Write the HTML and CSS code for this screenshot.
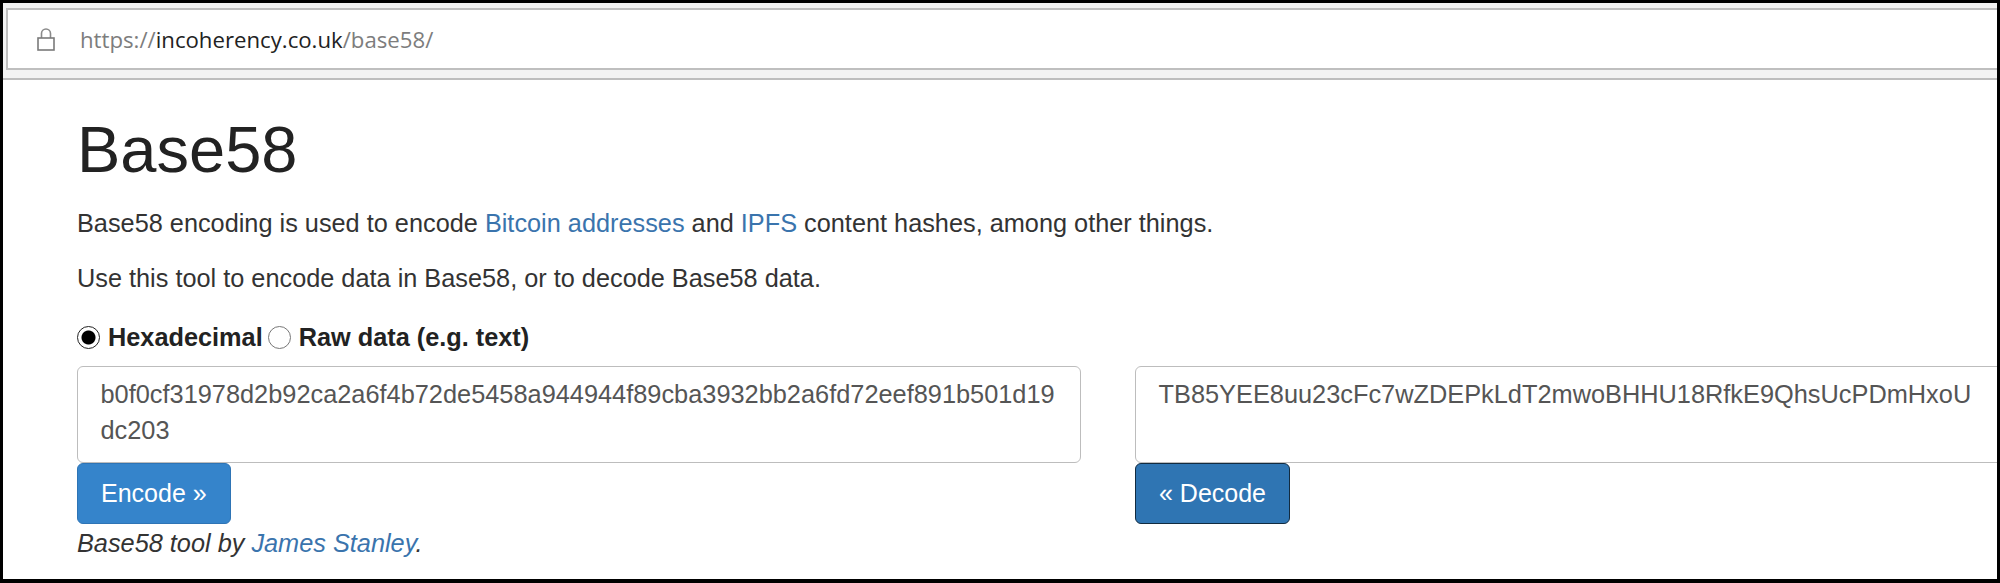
FILE: index.html
```html
<!DOCTYPE html>
<html lang="en">
<head>
<meta charset="utf-8">
<title>Base58</title>
<link rel="stylesheet" href="styles.css">
</head>
<body>
<div class="frame">
  <header class="chrome">
    <div class="address">
      <svg class="lock" viewBox="0 0 18 24" width="18" height="24" aria-hidden="true">
        <path d="M4.5 11V6.5a4.5 4.5 0 0 1 9 0V11" fill="none" stroke="#8a8a8a" stroke-width="1.6"/>
        <rect x="1" y="11" width="16" height="12" fill="none" stroke="#7a7a7a" stroke-width="1.6"/>
      </svg>
      <span class="url"><span class="dim">https://</span>incoherency.co.uk<span class="dim">/base58/</span></span>
    </div>
  </header>
  <main class="page">
    <h1 class="title">Base58</h1>
    <p class="para">Base58 encoding is used to encode <a href="#">Bitcoin addresses</a> and <a href="#">IPFS</a> content hashes, among other things.</p>
    <p class="para">Use this tool to encode data in Base58, or to decode Base58 data.</p>
    <div class="modes">
      <label class="mode"><input class="radio" type="radio" name="mode" checked> Hexadecimal</label>
      <label class="mode"><input class="radio" type="radio" name="mode"> Raw data (e.g. text)</label>
    </div>
    <div class="tools">
      <div class="tool">
        <textarea class="box" rows="2">b0f0cf31978d2b92ca2a6f4b72de5458a944944f89cba3932bb2a6fd72eef891b501d19dc203</textarea>
        <button class="btn btn-encode" type="button">Encode »</button>
      </div>
      <div class="tool">
        <textarea class="box" rows="2">TB85YEE8uu23cFc7wZDEPkLdT2mwoBHHU18RfkE9QhsUcPDmHxoU</textarea>
        <button class="btn btn-decode" type="button">« Decode</button>
      </div>
    </div>
    <p class="credit">Base58 tool by <a href="#">James Stanley</a>.</p>
  </main>
</div>
</body>
</html>
```
FILE: styles.css
```css
* { box-sizing: border-box; }
html, body { margin: 0; height: 100%; overflow: hidden; background: #000; }
.frame {
  height: 583px;
  border: solid #000;
  border-width: 3px 3px 4px 3px;
  background: #fff;
  overflow: hidden;
  font-family: "Liberation Sans", Arial, sans-serif;
  color: #333;
}
.chrome {
  padding: 5px 0 0 3px;
  height: 77px;
  background: #f2f2f2;
  border-bottom: 2px solid #bdbdbd;
}
.address {
  height: 62px;
  background: #fff;
  border: solid #bfbfbf;
  border-width: 2px 0 2px 2px;
  display: flex;
  align-items: center;
  padding-left: 29px;
}
.lock { flex: none; }
.url {
  margin-left: 25px;
  font-family: "Open Sans", sans-serif;
  font-size: 22.2px;
  color: #222;
}
.dim { color: #7d7d7d; }
.page { padding: 35px 0 0 74px; }
.title {
  margin: 0;
  font-size: 65px;
  font-weight: 400;
  line-height: 70px;
  color: #222;
}
.para { margin: 0; font-size: 25.3px; line-height: 36px; height: 55px; }
.title + .para { margin-top: 20px; }
a { color: #3a74ad; text-decoration: none; }
.modes { display: flex; gap: 5px; align-items: center; height: 36px; margin-top: 4px; font-weight: 700; font-size: 25.3px; }
.mode { display: flex; align-items: center; gap: 8px; color: #222; }
.radio {
  appearance: none;
  margin: 0;
  width: 23px;
  height: 23px;
  border-radius: 50%;
  border: 1.5px solid #777;
  background: #fff;
}
.radio:checked {
  border-color: #222;
  background: radial-gradient(circle, #000 0 6.5px, #fff 7.5px);
}
.tools {
  display: grid;
  grid-template-columns: 1004px 1000px;
  gap: 54px;
  margin-top: 11px;
}
.tool { display: flex; flex-direction: column; align-items: flex-start; }
.box {
  display: block;
  width: 100%;
  height: 97px;
  padding: 10px 22.5px;
  border: 1.5px solid #bdbdbd;
  border-radius: 6px;
  resize: none;
  overflow: hidden;
  font: 25.35px/35.6px "Liberation Sans", Arial, sans-serif;
  color: #555;
  background: #fff;
}
.btn {
  height: 61px;
  padding: 0 23px;
  border: 1.5px solid;
  border-radius: 6px;
  font: 25px "Liberation Sans", Arial, sans-serif;
  color: #fff;
}
.btn-encode { background: #3584cb; border-color: #2e74b5; }
.btn-decode { background: #2f75b3; border-color: #122b40; }
.credit { margin: 1px 0 0; font-size: 25.3px; line-height: 36px; font-style: italic; }
```
